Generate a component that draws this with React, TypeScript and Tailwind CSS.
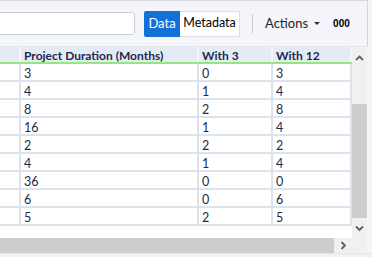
import React from "react";

const rows = [
  ["3", "0", "3"],
  ["4", "1", "4"],
  ["8", "2", "8"],
  ["16", "1", "4"],
  ["2", "2", "2"],
  ["4", "1", "4"],
  ["36", "0", "0"],
  ["6", "0", "6"],
  ["5", "2", "5"],
];

function Chevron({ dir }: { dir: "up" | "down" | "right" }) {
  const d =
    dir === "up"
      ? "M1 5 L4.5 1.5 L8 5"
      : dir === "down"
      ? "M1 1.5 L4.5 5 L8 1.5"
      : "M1.5 1 L5 4.5 L1.5 8";
  const w = dir === "right" ? 7 : 9;
  const h = dir === "right" ? 9 : 7;
  return (
    <svg width={w} height={h} viewBox={`0 0 ${w} ${h}`}>
      <path d={d} fill="none" stroke="#5f5f5f" strokeWidth="1.8" />
    </svg>
  );
}

export default function App() {
  return (
    <div
      className="w-[372px] h-[257px] overflow-hidden bg-[#f3f5fb] flex flex-col"
      style={{ fontFamily: "'Lato', 'Open Sans', sans-serif" }}
    >
      {/* toolbar */}
      <div className="w-[368px] h-[47px] shrink-0 border-t border-t-[#d6d8de] border-r border-r-[#d4d6dc] border-b border-b-[#e2e5ec] flex items-center">
        <div className="-ml-[6px] w-[141px] h-[23px] rounded-[3px] border border-[#c9cdd6] bg-white" />
        <div className="ml-[9px] flex h-[26px]">
          <div className="w-[36px] h-full bg-[#1470d6] text-white text-[13px] flex items-center justify-center rounded-l-[2px]">
            Data
          </div>
          <div className="w-[60px] h-full bg-white border border-[#dcdfe6] border-l-0 text-black text-[12.5px] flex items-center justify-center rounded-r-[2px]">
            Metadata
          </div>
        </div>
        <div className="ml-[12px] w-px h-[19px] bg-[#c6c8cc]" />
        <div className="ml-[12px] text-[13px] text-[#1f2430] flex items-center">
          Actions
          <span className="ml-[6px] inline-block w-0 h-0 border-l-[3px] border-r-[3px] border-t-[3px] border-l-transparent border-r-transparent border-t-[#333]" />
        </div>
        <div
          className="ml-[13px] text-[10px] font-bold text-black"
          style={{ fontFamily: "'Liberation Sans', sans-serif" }}
        >
          000
        </div>
      </div>

      {/* grid */}
      <div className="flex w-[368px] h-[191px] shrink-0">
        <div className="w-[352px] flex flex-col bg-white">
          <div className="h-[17px] shrink-0 flex bg-[#e5ebf6] border-b-2 border-b-[#96e67a] box-border text-[12px] font-bold text-[#1e2a48]">
            <div className="w-[21px] border-r-2 border-r-[#f3f5fa]" />
            <div className="w-[178px] border-r-2 border-r-[#f3f5fa] pl-[3px] leading-[17px]">
              Project Duration (Months)
            </div>
            <div className="w-[74px] border-r-2 border-r-[#f3f5fa] pl-[3px] leading-[17px]">
              With 3
            </div>
            <div className="w-[79px] border-r-2 border-r-[#f3f5fa] pl-[3px] leading-[17px]">
              With 12
            </div>
          </div>
          {rows.map((r, i) => (
            <div
              key={i}
              className="h-[18px] shrink-0 flex border-b-2 border-b-[#dce3ef] box-border text-[12.5px] text-[#1e2a48]"
            >
              <div className="w-[21px] border-r-2 border-r-[#dce3ef]" />
              <div className="w-[178px] border-r-2 border-r-[#dce3ef] pl-[3px] leading-[20px]">
                {r[0]}
              </div>
              <div className="w-[74px] border-r-2 border-r-[#dce3ef] pl-[3px] leading-[20px]">
                {r[1]}
              </div>
              <div className="w-[79px] border-r-2 border-r-[#dce3ef] pl-[3px] leading-[20px]">
                {r[2]}
              </div>
            </div>
          ))}
          <div className="flex-1 bg-white" />
        </div>
        <div className="w-[15px] bg-[#f0f0f0] flex flex-col items-center">
          <div className="h-[20px] flex items-center justify-center pt-[2px]">
            <Chevron dir="up" />
          </div>
          <div className="mt-[37px] w-[15px] h-[114px] bg-[#cdcdcd]" />
          <div className="flex-1 flex items-center justify-center">
            <Chevron dir="down" />
          </div>
        </div>
      </div>

      {/* horizontal scrollbar */}
      <div className="flex w-[367px] h-[15px] shrink-0 bg-[#f0f0f0]">
        <div className="w-[334px] h-full bg-[#cdcdcd]" />
        <div className="w-[18px] flex items-center justify-center">
          <Chevron dir="right" />
        </div>
      </div>
      <div className="flex-1 border-t border-t-[#e3e6ee] bg-[#eef1f8]" />
    </div>
  );
}
